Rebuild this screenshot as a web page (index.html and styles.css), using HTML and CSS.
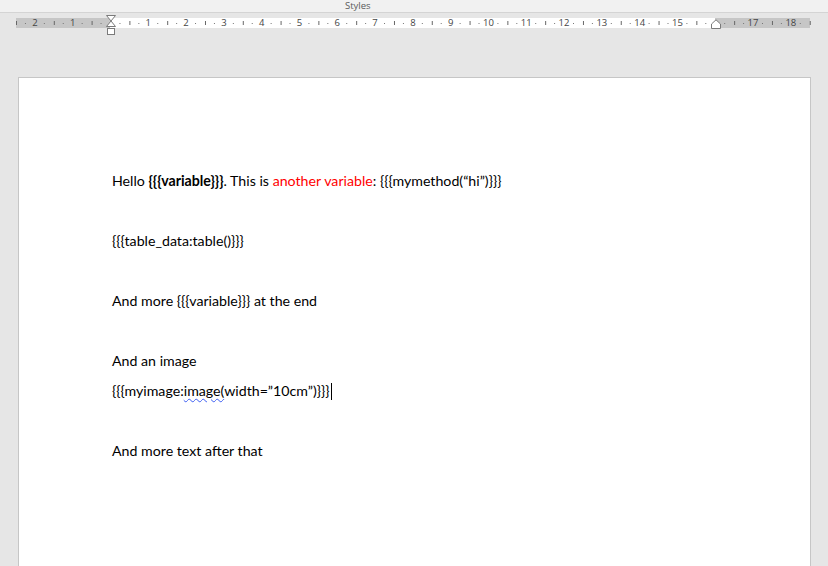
FILE: index.html
```html
<!DOCTYPE html>
<html>
<head>
<meta charset="utf-8">
<link rel="stylesheet" href="styles.css">
</head>
<body>
<div class="titlebar"><span class="title">Styles</span></div>
<div class="ruler-area">
  <div class="ruler">
    <div class="nums">
      <span>2</span><span>1</span><span></span><span>1</span><span>2</span><span>3</span><span>4</span><span>5</span><span>6</span><span>7</span><span>8</span><span>9</span><span>10</span><span>11</span><span>12</span><span>13</span><span>14</span><span>15</span><span></span><span>17</span><span>18</span>
    </div>
    <svg class="marker-left" width="12" height="22" viewBox="0 0 12 22">
      <path d="M1.5 0.5 H10.5 L6 6 L10.5 11.5 H1.5 L6 6 Z" fill="#fff" stroke="#7a7a7a" stroke-width="1"/>
      <rect x="2.5" y="13.5" width="7" height="6" fill="#fff" stroke="#7a7a7a" stroke-width="1"/>
    </svg>
    <svg class="marker-right" width="12" height="10" viewBox="0 0 12 10">
      <path d="M6 0.8 L10.5 5 V9.5 H1.5 V5 Z" fill="#fff" stroke="#7a7a7a" stroke-width="1"/>
    </svg>
  </div>
</div>
<div class="page">
  <p>Hello <b>{{{variable}}}</b>. This is <span class="red">another variable</span>: {{{mymethod(“hi”)}}}</p>
  <p>&nbsp;</p>
  <p>{{{table_data:table()}}}</p>
  <p>&nbsp;</p>
  <p>And more {{{variable}}} at the end</p>
  <p>&nbsp;</p>
  <p>And an image</p>
  <p>{{{myimage:<span class="spell">image(</span>width=”10cm”)}}}<span class="cursor"></span></p>
  <p>&nbsp;</p>
  <p>And more text after that</p>
</div>
</body>
</html>
```

FILE: styles.css
```css
html, body {
  margin: 0;
  padding: 0;
  height: 100%;
  overflow: hidden;
}
body {
  background: #e6e6e6;
  font-family: "Lato", "Noto Sans", sans-serif;
}
.titlebar {
  height: 12px;
  background: #f1f1f1;
  border-bottom: 1px solid #d4d4d4;
  display: flex;
  align-items: flex-start;
  padding-left: 345px;
}
.title {
  font-family: "Open Sans", sans-serif;
  font-size: 9.5px;
  color: #5a5a5a;
  line-height: 11px;
}
.ruler-area {
  height: 64px;
  padding-top: 5px;
  box-sizing: border-box;
}
.ruler {
  position: relative;
  margin-left: 16px;
  width: 795px;
  height: 10px;
  background:
    linear-gradient(to right, #666 1px, transparent 1px) 0 3px / 37.8px 4px repeat-x,
    linear-gradient(to right, transparent 9px, #777 9px, #777 10px, transparent 10px, transparent 28px, #777 28px, #777 29px, transparent 29px) 0 5px / 37.8px 1px repeat-x,
    linear-gradient(to right, #c6c6c6 0, #c6c6c6 94.5px, #ffffff 94.5px, #ffffff 699.3px, #c6c6c6 699.3px, #c6c6c6 794px, transparent 794px);
}
.nums {
  display: grid;
  grid-template-columns: repeat(21, 37.8px);
  height: 10px;
}
.nums span {
  text-align: center;
  font-family: "Open Sans", sans-serif;
  font-size: 9.5px;
  line-height: 10px;
  color: #444;
}
.nums span:not(:empty) {
  background: #fff;
  justify-self: center;
  padding: 0 1px;
}
.nums span:nth-child(-n+2):not(:empty),
.nums span:nth-child(n+20):not(:empty) {
  background: #c6c6c6;
}
.marker-left {
  position: absolute;
  left: 89px;
  top: -3px;
}
.marker-right {
  position: absolute;
  left: 694px;
  top: 1px;
}
.page {
  margin-left: 18px;
  width: 793px;
  height: 600px;
  background: #fff;
  border: 1px solid #c6c6c6;
  box-sizing: border-box;
  padding: 88px 0 0 93px;
}
.page p {
  margin: 0;
  font-size: 14.2px;
  line-height: 30px;
  height: 30px;
  color: #000;
  white-space: nowrap;
}
.red {
  color: #ff0000;
}
.spell {
  text-decoration: underline wavy #3d5ef2;
  text-decoration-thickness: 1px;
  text-underline-offset: 2px;
}
.cursor {
  display: inline-block;
  width: 1px;
  height: 17px;
  background: #000;
  vertical-align: -4px;
  margin-left: 1px;
}
```
